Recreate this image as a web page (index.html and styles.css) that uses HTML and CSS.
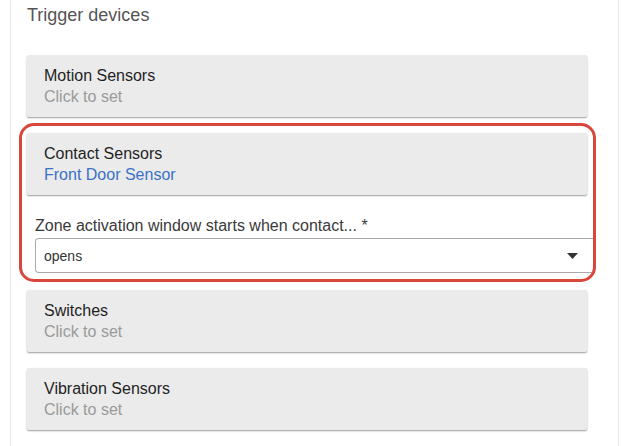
FILE: index.html
```html
<!DOCTYPE html>
<html>
<head>
<meta charset="utf-8">
<link rel="stylesheet" href="styles.css">
</head>
<body>
<div class="panel">
  <div class="title">Trigger devices</div>
  <div class="list">
    <div class="card">
      <div class="card-name">Motion Sensors</div>
      <div class="card-value">Click to set</div>
    </div>
    <div class="group">
      <div class="card">
        <div class="card-name">Contact Sensors</div>
        <div class="card-value selected">Front Door Sensor</div>
      </div>
      <div class="field">
        <div class="field-label">Zone activation window starts when contact... *</div>
        <div class="select">
          <span class="select-text">opens</span>
          <svg class="select-arrow" width="11" height="6" viewBox="0 0 11 6"><path d="M0 0 L11 0 L5.5 6 Z" fill="#333"/></svg>
        </div>
      </div>
    </div>
    <div class="card">
      <div class="card-name">Switches</div>
      <div class="card-value">Click to set</div>
    </div>
    <div class="card">
      <div class="card-name">Vibration Sensors</div>
      <div class="card-value">Click to set</div>
    </div>
  </div>
</div>
</body>
</html>
```
FILE: styles.css
```css
html, body {
  margin: 0;
  padding: 0;
  background: #fff;
  overflow: hidden;
  height: 446px;
}
body {
  font-family: "Liberation Sans", Arial, sans-serif;
}
.panel {
  margin-left: 10px;
  width: 609px;
  height: 446px;
  border-left: 1px solid #e6e6e6;
  border-right: 1px solid #e6e6e6;
  padding: 3px 31px 0 16px;
  box-sizing: border-box;
}
.title {
  font-size: 18px;
  line-height: 24px;
  color: #555;
}
.list {
  margin-top: 28px;
  display: flex;
  flex-direction: column;
  gap: 16px;
}
.card {
  background: #ebebeb;
  border-radius: 2px;
  height: 62px;
  box-sizing: border-box;
  padding: 10px 17px;
  box-shadow: 0 1px 2px rgba(0,0,0,0.3), 0 1px 1px rgba(0,0,0,0.12);
}
.card-name {
  font-size: 16px;
  line-height: 21px;
  color: #1f1f1f;
}
.card-value {
  font-size: 16px;
  line-height: 21px;
  color: #9a9a9a;
}
.card-value.selected {
  color: #3a72c6;
}
.group {
  position: relative;
  padding-bottom: 1px;
}
.group::after {
  content: "";
  position: absolute;
  left: -8px;
  top: -10px;
  right: -9px;
  bottom: -8px;
  border: 3px solid #d8463c;
  border-radius: 15px;
  pointer-events: none;
}
.field {
  margin: 21px -7px 0 8px;
}
.field-label {
  font-size: 16px;
  line-height: 20px;
  color: #3a3a3a;
}
.select {
  margin-top: 2px;
  height: 35px;
  box-sizing: border-box;
  border: 1px solid #a9a9a9;
  border-right: none;
  border-radius: 4px 0 0 4px;
  display: flex;
  align-items: center;
  justify-content: space-between;
  padding: 0 16px 0 8px;
}
.select-text {
  font-size: 14px;
  color: #333;
}
.select-arrow {
  display: block;
}
```
